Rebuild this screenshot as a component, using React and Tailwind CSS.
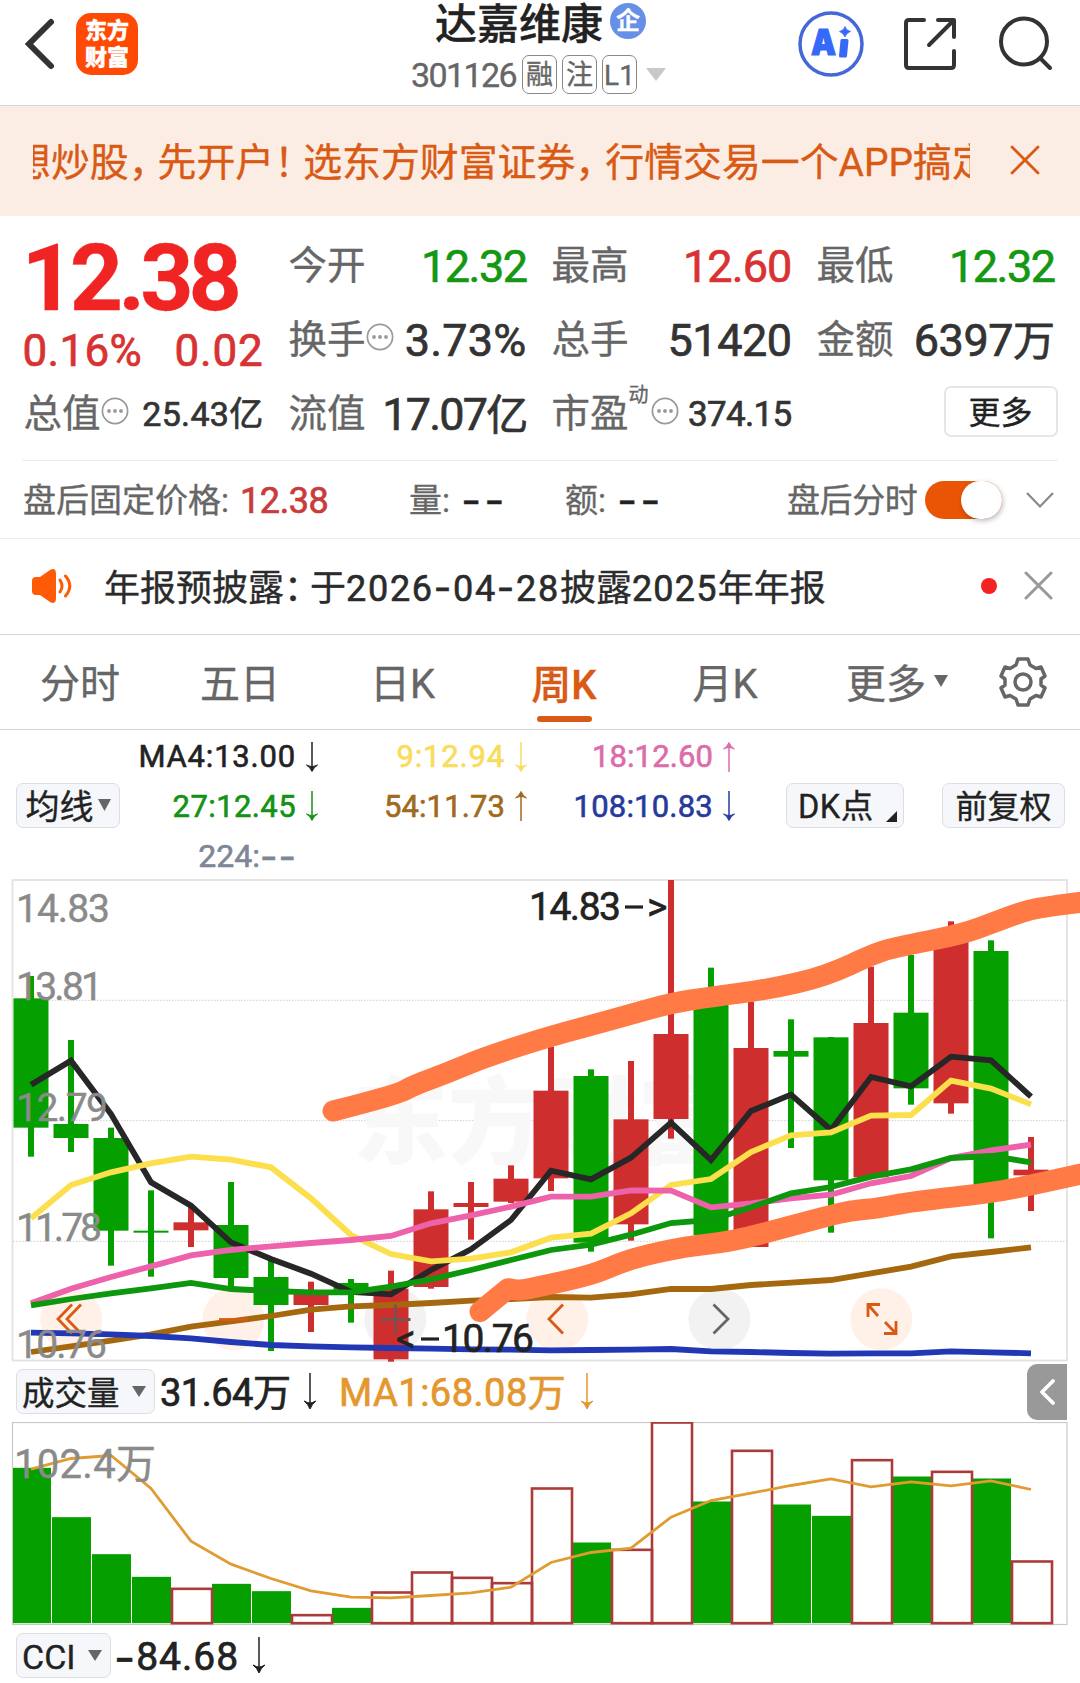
import React from "react";

const GREEN = "#05a000";
const RED = "#cf2e2e";
const CJK = '"Noto Sans CJK SC"';
const STACK = `Roboto, ${CJK}, sans-serif`;

/* Price data is kept in thirds of a pixel: [high, bodyTop, bodyBottom, low, up] */
const candles = [
  [318, 385, 773, 860, 0], [510, 762, 804, 846, 0], [773, 804, 1082, 1187, 0],
  [961, 1082, 1088, 1220, 0], [1010, 1057, 1081, 1131, 1], [936, 1065, 1224, 1255, 0],
  [1170, 1221, 1305, 1443, 0], [1235, 1270, 1305, 1386, 1], [1227, 1239, 1275, 1358, 0],
  [1202, 1256, 1468, 1475, 1], [964, 1018, 1251, 1256, 1], [936, 999, 1011, 1109, 1],
  [886, 926, 995, 999, 1], [530, 662, 925, 963, 1], [598, 618, 1118, 1145, 0],
  [573, 748, 1063, 1112, 1], [30, 492, 747, 806, 1], [293, 400, 1095, 1095, 0],
  [395, 534, 1131, 1131, 1], [448, 543, 560, 834, 0], [501, 502, 931, 1088, 0],
  [290, 459, 922, 922, 1], [255, 428, 655, 704, 0], [154, 215, 700, 731, 1],
  [211, 243, 945, 1105, 0], [801, 899, 916, 1023, 1],
];

const averages = [
  { color: "#272727", data: [644, 572, 732, 937, 1007, 1117, 1167, 1211, 1266, 1273, 1200, 1138, 1050, 902, 928, 863, 758, 870, 723, 674, 780, 621, 649, 560, 571, 680] },
  { color: "#fbdf4c", data: [1045, 945, 907, 880, 860, 869, 892, 985, 1095, 1152, 1174, 1166, 1147, 1103, 1091, 1030, 945, 927, 846, 796, 787, 737, 735, 632, 656, 703] },
  { color: "#ee61ab", data: [1300, 1256, 1221, 1189, 1156, 1140, 1129, 1119, 1110, 1098, 1060, 1036, 1010, 980, 980, 961, 962, 1012, 1000, 985, 974, 940, 918, 864, 841, 824] },
  { color: "#0c970c", data: [1306, 1287, 1270, 1255, 1239, 1257, 1263, 1267, 1267, 1250, 1228, 1200, 1170, 1140, 1124, 1094, 1059, 1050, 1012, 970, 951, 920, 898, 864, 858, 877] },
  { color: "#a5680f", data: [1446, 1429, 1412, 1393, 1370, 1354, 1338, 1319, 1309, 1305, 1299, 1292, 1287, 1281, 1283, 1273, 1257, 1257, 1245, 1238, 1230, 1210, 1190, 1159, 1146, 1132] },
  { color: "#2137b4", data: [1388, 1390, 1393, 1398, 1405, 1416, 1425, 1429, 1432, 1434, 1436, 1438, 1439, 1441, 1440, 1439, 1437, 1444, 1446, 1449, 1451, 1450, 1450, 1444, 1447, 1450] },
];

const upperMark = [[333, 723], [396, 675], [413, 647], [448, 608], [482, 565], [540, 508], [592, 465], [626, 437], [671, 399], [712, 380], [771, 357], [826, 318], [877, 247], [902, 228], [963, 192], [994, 157], [1022, 126], [1039, 113], [1090, 93]];
const lowerMark = [[480, 1325], [494, 1290], [508, 1256], [508, 1256], [520, 1262], [540, 1249], [592, 1215], [619, 1180], [643, 1157], [685, 1130], [733, 1114], [788, 1070], [826, 1040], [850, 1022], [877, 1015], [912, 995], [994, 968], [1036, 942], [1090, 906]];

const volumes = [
  [323, 0], [471, 0], [582, 0], [650, 0], [686, 1], [671, 0], [693, 0], [765, 1], [743, 0],
  [697, 1], [637, 1], [653, 1], [669, 1], [385, 1], [547, 0], [569, 1], [187, 1], [424, 0],
  [272, 1], [433, 0], [467, 0], [300, 1], [349, 0], [335, 1], [355, 0], [604, 1],
];
const volumeMa = [327, 295, 286, 385, 543, 612, 655, 692, 711, 713, 706, 698, 681, 607, 577, 564, 471, 421, 399, 376, 356, 380, 365, 377, 362, 388];

const cx = (i) => 31 + 40 * i;
const py = (v) => (v - 30) / 3 + 1;
const vy = (v) => (v - 187) / 3 + 1;

function smooth(points) {
  const p = points.map(([x, v]) => [x, py(v)]);
  let d = `M${p[0][0]} ${p[0][1]}`;
  for (let i = 1; i < p.length - 1; i++) {
    d += ` Q${p[i][0]} ${p[i][1]} ${(p[i][0] + p[i + 1][0]) / 2} ${(p[i][1] + p[i + 1][1]) / 2}`;
  }
  return `${d} L${p[p.length - 1][0]} ${p[p.length - 1][1]}`;
}

function Arrow({ up, tall }) {
  return (
    <svg width="22" height={tall ? 39 : 32} viewBox={tall ? "0 0 22 39" : "0 0 22 32"} fill="none" stroke="currentColor" className="shrink-0">
      <g transform={up ? "rotate(180 11 16)" : undefined}>
        <path d={tall ? "M11 1V36" : "M11 1V29"} strokeWidth="1.5" />
        <path d={tall ? "M5 29Q9 32 11 37Q13 32 17 29Q13 31 11 31Q9 31 5 29Z" : "M5.5 24Q9 26 11 30.500Q13 26 16.500 24Q13 25.500 11 25.500Q9 25.500 5.500 24Z"} fill="currentColor" strokeWidth="1" />
      </g>
    </svg>
  );
}

function Dots() {
  return (
    <svg width="28" height="28" viewBox="0 0 28 28" className="mb-1 shrink-0">
      <circle cx="14" cy="14" r="12.600" fill="none" stroke="#999" strokeWidth="1.700" />
      {[8, 14, 20].map((x) => <circle key={x} cx={x} cy="14" r="1.900" fill="#999" />)}
    </svg>
  );
}

function Down({ w = 14, h = 12, color = "#666" }) {
  return <svg width={w} height={h} viewBox="0 0 14 12" preserveAspectRatio="none" className="shrink-0"><path d="M0 0H14L7 12Z" fill={color} /></svg>;
}

function Cell({ label, icon, sup, children }) {
  return (
    <div className="flex h-[74px] items-center justify-between leading-none whitespace-nowrap">
      <div className="flex items-center">
        <span className="pt-[3px] text-[38.5px] text-[#666]">{label}</span>
        {sup && <span className="mr-0.5 mb-9 text-[20px] text-[#666]">{sup}</span>}
        {icon && <Dots />}
      </div>
      <div className="pt-0.5 text-[#333] [-webkit-text-stroke:0.7px]">{children}</div>
    </div>
  );
}

function Ma({ up, children, className }) {
  return (
    <div className={`flex h-[49.5px] items-center justify-end gap-[5px] text-[31px] leading-none whitespace-nowrap [-webkit-text-stroke:0.6px] ${className}`}>
      {children}
      <Arrow up={up} />
    </div>
  );
}

function Header() {
  return (
    <header className="flex h-[106px] items-start border-b border-[#d6d6d6] pl-[22px]">
      <svg width="34" height="56" viewBox="0 0 34 56" className="mt-4 shrink-0" fill="none" stroke="#333" strokeWidth="6" strokeLinecap="round" strokeLinejoin="miter">
        <path d="M29 6L7 28L29 50" />
      </svg>
      <div className="mt-[13px] ml-5 flex h-[62px] w-[62px] flex-col items-center justify-center rounded-[15px] bg-[#ff4a05] text-[22px] leading-[27px] font-black text-white">
        <span>东方</span><span>财富</span>
      </div>
      <div className="ml-[273px] flex w-[267px] flex-col">
        <div className="flex h-[46px] items-center pl-[24px]">
          <span className="pt-1 text-[42px] leading-[44px] font-medium text-[#222]">达嘉维康</span>
          <span className="mb-1 ml-[7px] flex h-9 w-9 items-center justify-center rounded-full bg-[#6690e6] text-[24px] leading-none font-bold text-white">企</span>
        </div>
        <div className="mt-[9px] flex h-[39px] items-center gap-[5px] leading-none text-[#666]">
          <span className="mr-[1px] w-[105px] text-[34px] tracking-[-1.6px]">301126</span>
          <span className="flex h-[39px] w-[35px] shrink-0 items-center justify-center rounded-[7px] border border-[#888] pt-0.5 text-[27px]">融</span>
          <span className="flex h-[39px] w-[35px] shrink-0 items-center justify-center rounded-[7px] border border-[#888] pt-0.5 text-[27px]">注</span>
          <span className="flex h-[39px] w-[35px] shrink-0 items-center justify-center rounded-[7px] border border-[#888] pt-0.5 text-[28px]">L1</span>
          <span className="ml-1 flex"><Down w={20} h={13} color="#c8c8c8" /></span>
        </div>
      </div>
      <svg width="66" height="66" viewBox="0 0 66 66" className="mt-[11px] ml-[120px] shrink-0">
        <circle cx="33" cy="33" r="31" fill="none" stroke="#4468d8" strokeWidth="3.500" />
        <text x="13" y="44" fontFamily="Inter, sans-serif" fontWeight="900" fontSize="36" fill="#3668fa" stroke="#3668fa" strokeWidth="1.200" strokeLinejoin="round" textLength="25" lengthAdjust="spacingAndGlyphs">A</text>
        <path d="M44 29.500H49L47.500 45H42.500Z" fill="#3668fa" stroke="#3668fa" strokeWidth="3" strokeLinejoin="round" />
        <path d="M47 15.500Q48 19.500 52.500 20.500Q48 22 47 26Q45.500 22 41.500 20.500Q46 19.500 47 15.500Z" fill="#3668fa" stroke="#3668fa" strokeWidth="0.800" />
      </svg>
      <svg width="56" height="56" viewBox="0 0 56 56" className="mt-4 ml-[38px] shrink-0" fill="none" stroke="#333" strokeWidth="4" strokeLinecap="round" strokeLinejoin="round">
        <path d="M22 4H7Q4 4 4 7V49Q4 52 7 52H49Q52 52 52 49V35M36 4H52V21M51 5L27 29" />
      </svg>
      <svg width="58" height="58" viewBox="0 0 58 58" className="mt-[15px] ml-[38px] shrink-0" fill="none" stroke="#333" strokeWidth="4" strokeLinecap="round">
        <circle cx="28" cy="26.500" r="23" /><path d="M44 43L54 53" />
      </svg>
    </header>
  );
}

export default function App() {
  return (
    <div className="h-[1683px] w-[1080px] overflow-hidden bg-white [-webkit-text-stroke:0.35px]" style={{ fontFamily: STACK }}>
      <Header />

      <div className="flex h-[110px] items-center bg-[#fcede4] pl-[33px] text-[#d95a14]">
        <div className="flex w-[937px] overflow-hidden pt-[3px]">
          <span className="-ml-[21px] text-[38.9px] leading-[50px] whitespace-nowrap">
            想炒股<span className="tracking-[-10px]">，</span>先开户<span className="tracking-[-10px]">！</span>选东方财富证券<span className="tracking-[-9px]">，</span>行情交易一个APP搞定
          </span>
        </div>
        <svg width="30" height="30" viewBox="0 0 30 30" className="mb-0.5 ml-10" stroke="#d95a14" strokeWidth="2.800" strokeLinecap="round"><path d="M2 2L28 28M28 2L2 28" /></svg>
      </div>

      <section className="mx-[22px] grid h-[245px] grid-cols-[240px_238px_240px_238px] content-start gap-x-[25px] border-b border-[#ececec] px-[1.5px] pt-3">
        <div>
          <div className="-ml-0.5 flex h-24 items-center pt-1 text-[93px] leading-none font-bold tracking-[-5px] text-[#f12424]">12.38</div>
          <div className="-ml-[1px] flex h-[52px] items-center justify-between pt-0.5 text-[44px] leading-none text-[#d83232] [-webkit-text-stroke:0.7px]">
            <span className="tracking-[0.300px]">0.16%</span><span className="tracking-[0.8px]">0.02</span>
          </div>
          <Cell label="总值" icon><span className="text-[34px] tracking-[0.300px]">25.43亿</span></Cell>
        </div>
        <div>
          <Cell label="今开"><span className="text-[45px] tracking-[-1.500px] text-[#149814]">12.32</span></Cell>
          <Cell label="换手" icon><span className="text-[45px] tracking-[0.200px]">3.73%</span></Cell>
          <Cell label="流值"><span className="text-[45px] tracking-[-1.800px]">17.07<span className="text-[42px]">亿</span></span></Cell>
        </div>
        <div>
          <Cell label="最高"><span className="text-[45px] tracking-[-0.900px] text-[#d83232]">12.60</span></Cell>
          <Cell label="总手"><span className="text-[45px] tracking-[-0.5px]">51420</span></Cell>
          <Cell label="市盈" sup="动" icon><span className="text-[35px] tracking-[-0.700px]">374.15</span></Cell>
        </div>
        <div>
          <Cell label="最低"><span className="text-[45px] tracking-[-1.500px] text-[#149814]">12.32</span></Cell>
          <Cell label="金额"><span className="text-[45px] tracking-[-0.500px]">6397<span className="text-[42px]">万</span></span></Cell>
          <div className="-mr-[3px] flex h-[74px] items-center justify-end">
            <button className="mb-[3px] h-[51px] w-[114px] rounded-[7px] border-2 border-[#e6e6e6] pt-[3px] text-[32px] leading-none text-[#222]">更多</button>
          </div>
        </div>
      </section>

      <section className="flex h-[78px] items-center border-b border-[#ececec] pl-[23px] text-[33px] leading-none whitespace-nowrap text-[#666]">
        <span className="w-[217px] pt-0.5">盘后固定价格:</span>
        <span className="w-[169px] pt-0.5 text-[36px] tracking-[-0.400px] text-[#c83c3c] [-webkit-text-stroke:0.7px]">12.38</span>
        <span className="w-[52px] pt-0.5">量:</span>
        <span className="w-[104px] font-['Inter'] text-[44px] tracking-[3px] text-[#222]">--</span>
        <span className="w-[52px] pt-0.5">额:</span>
        <span className="w-[170px] font-['Inter'] text-[44px] tracking-[3px] text-[#222]">--</span>
        <span className="pt-0.5 tracking-[-0.400px]">盘后分时</span>
        <div className="ml-[8px] flex h-[38px] w-[77px] justify-end rounded-full bg-[#e95504]">
          <div className="h-[38px] w-[41px] rounded-full bg-white shadow-[1px_2px_5px_rgba(0,0,0,0.25)]" />
        </div>
        <svg width="28" height="18" viewBox="0 0 28 18" className="ml-6" fill="none" stroke="#888" strokeWidth="2.200"><path d="M1 2L14 15.500L27 2" /></svg>
      </section>

      <section className="flex h-24 items-center border-b border-[#d6d6d6] pl-[31px]">
        <svg width="42" height="36" viewBox="0 0 42 36" className="mb-0.5 shrink-0" fill="none" stroke="#ff5a05" strokeWidth="3" strokeLinecap="round">
          <path d="M1 13Q1 9 5 9H9L19 2Q25 -1 25 6V30Q25 37 19 34L9 27H5Q1 27 1 23Z" fill="#ff5a05" stroke="none" />
          <path d="M29 12Q33 18 29 24M34.500 8Q43 18 34.500 28" />
        </svg>
        <span className="ml-[31px] w-[877px] pt-0.5 text-[36px] leading-none whitespace-nowrap text-[#2b2b2b]">
          年报预披露<span className="tracking-[-10px]">：</span>于<span className="tracking-[1.7px] [-webkit-text-stroke:0.6px]">2026<span className="font-['Inter'] text-[38px]">-</span>04<span className="font-['Inter'] text-[38px]">-</span>28</span>披露<span className="tracking-[1.2px] [-webkit-text-stroke:0.6px]">2025</span>年年报
        </span>
        <span className="mb-0.5 h-4 w-4 rounded-full bg-[#f52222]" />
        <svg width="30" height="30" viewBox="0 0 30 30" className="mb-0.5 ml-[27px]" stroke="#999" strokeWidth="3" strokeLinecap="round"><path d="M2 2L27 27M27 2L2 27" /></svg>
      </section>

      <nav className="flex h-[95px] items-center border-b border-[#d6d6d6] text-[40px] leading-none text-[#666]">
        <span className="w-[160px] pt-[6px] text-center">分时</span>
        <span className="w-[160px] pt-[6px] text-center">五日</span>
        <span className="w-[165px] pt-[6px] text-center">日K</span>
        <span className="flex h-full w-[158px] flex-col items-center text-[#d95a14]">
          <span className="flex h-[81px] items-center pt-[20px] font-medium">周K</span>
          <span className="h-[6px] w-[55px] rounded-full bg-[#d95a14]" />
        </span>
        <span className="w-[164px] pt-[6px] text-center">月K</span>
        <span className="ml-[39px] pt-[6px]">更多</span>
        <span className="mb-0.5 ml-[8px]"><Down w={14} h={12} /></span>
        <svg width="48" height="50" viewBox="0 0 48 50" className="ml-[51px]" fill="none" stroke="#666" strokeWidth="3.500" strokeLinejoin="round">
          <path d="M19 2H29L31 8L37 11.500L42 10L46 19L42 22V28L46 31L42 40L37 38.500L31 42L29 48H19L17 42L11 38.500L6 40L2 31L6 28V22L2 19L6 10L11 11.500L17 8Z" />
          <circle cx="24" cy="25" r="8" />
        </svg>
      </nav>

      <section className="grid h-[149px] grid-cols-[120px_203px_209px_208px_340px] content-start pt-0.5">
        <div className="col-start-1 row-start-2 flex items-center pb-0.5 pl-4">
          <button className="flex h-[45px] w-[104px] items-center justify-center gap-1 rounded-[7px] border border-[#dcdee2] bg-[#f6f7fa] text-[34px] leading-none text-[#222]"><span className="pt-[3px]">均线</span><Down w={13} h={12} /></button>
        </div>
        <Ma className="col-start-2 row-start-1 tracking-[0.8px] text-[#222]">MA4:13.00</Ma>
        <Ma className="col-start-3 row-start-1 tracking-[0.8px] text-[#f8dc5a]">9:12.94</Ma>
        <Ma up className="col-start-4 row-start-1 tracking-[0.100px] text-[#dc6caa]">18:12.60</Ma>
        <Ma className="col-start-2 row-start-2 tracking-[0.400px] text-[#149214]">27:12.45</Ma>
        <Ma up className="col-start-3 row-start-2 tracking-[0.100px] text-[#a06a1c]">54:11.73</Ma>
        <Ma className="col-start-4 row-start-2 tracking-[0.200px] text-[#263a9c]">108:10.83</Ma>
        <div className="col-start-5 row-start-2 flex items-center pb-0.5 pl-[46px]">
          <button className="flex h-[45px] w-[118px] shrink-0 items-center rounded-[7px] border border-[#dcdee2] bg-[#f6f7fa] pl-[11px] text-[32.500px] leading-none whitespace-nowrap text-[#222]">
            <span className="w-[78px] pt-[3px] text-left tracking-[0.500px]">DK点</span>
            <svg width="11" height="11" viewBox="0 0 11 11" className="mt-[22px] ml-[10px] shrink-0"><path d="M11 0V11H0Z" fill="#222" /></svg>
          </button>
          <button className="ml-[38px] h-[45px] w-[123px] shrink-0 rounded-[7px] border border-[#dcdee2] bg-[#f6f7fa] pt-[3px] text-[32px] leading-none text-[#222]">前复权</button>
        </div>
        <div className="col-start-2 row-start-3 flex h-[49.5px] items-center justify-end pr-[26px] text-[32px] leading-none text-[#7d8796] [-webkit-text-stroke:0.6px]">
          224:<span className="font-['Inter'] text-[38px] tracking-[1px]">--</span>
        </div>
      </section>

      <svg width="1080" height="484" viewBox="0 0 1080 484" className="block" fontFamily={STACK}>
        <rect x="12.500" y="1" width="1054.500" height="480.500" fill="none" stroke="#e2e2e2" strokeWidth="1.800" />
        {[391, 752, 1114].map((v) => <line key={v} x1="13" x2="1067" y1={py(v)} y2={py(v)} stroke="#cfcfcf" strokeWidth="1" strokeDasharray="1.500 1.500" />)}
        <text x="353" y={py(862)} fontSize="95" fontWeight="900" fill="#f8f8f8">东方财富</text>
        {[71.300, 233.500, 395.300, 557.200, 719.400, 881.300].map((x, i) => (
          <circle key={x} cx={x} cy={py(1348)} r="31" fill={i === 2 || i === 4 ? "#f2f2f2" : "#fff0e8"} />
        ))}
        {candles.map(([h, t, b, l, up], i) => (
          <g key={i} fill={up ? RED : GREEN}>
            <rect x={cx(i) - 3} y={py(h)} width="6" height={(l - h) / 3} />
            <rect x={cx(i) - 17.500} y={py(t)} width="35" height={(b - t) / 3} />
          </g>
        ))}
        {averages.map(({ color, data }) => (
          <polyline key={color} points={data.map((v, i) => `${cx(i)},${py(v)}`).join(" ")} fill="none" stroke={color} strokeWidth="5.800" />
        ))}
        <g fill="none" stroke="#d95a14" strokeWidth="2.800">
          <path d="M72 425.500L58 440L72 454.500M81 425.500L67 440L81 454.500" />
          <path d="M219 440.500H248" />
          <path d="M563 425.500L549 440L563 454.500" />
          <path d="M868 438V425.500H880M868 425.500L878 437M896 442V454.500H884M896 454.500L885 443" />
        </g>
        <path d="M380.500 440.500H410.500M395.500 425.500V455.500" stroke="#7a5050" strokeWidth="2.800" />
        <path d="M713.500 425.500L728 440L713.500 454.500" fill="none" stroke="#666" strokeWidth="2.800" />
        <g fontSize="39" fill="#8a8a8a" stroke="#8a8a8a" strokeWidth="0.400">
          <text x="16" y={py(156)} textLength="94">14.83</text>
          <text x="16" y={py(391)} textLength="87">13.81</text>
          <text x="16" y={py(752)} textLength="92">12.79</text>
          <text x="16" y={py(1114)} textLength="86">11.78</text>
          <text x="16" y={py(1464)} textLength="91">10.76</text>
        </g>
        <g fontSize="39" fill="#222" stroke="#222" strokeWidth="0.600">
          <text x="529" y={py(150)} textLength="92">14.83</text>
          <path d="M625 28H643" strokeWidth="3.200" />
          <text x="647" y={py(150)}>&gt;</text>
          <text x="396" y={py(1446)}>&lt;</text>
          <path d="M421 460H439" strokeWidth="3.200" />
          <text x="442" y={py(1446)} textLength="92">10.76</text>
        </g>
        <g fill="none" stroke="#ff7a45" strokeWidth="21" strokeLinecap="round" strokeLinejoin="round">
          <path d={smooth(upperMark)} />
          <path d={smooth(lowerMark)} />
        </g>
      </svg>

      <section className="flex h-[59px] items-center pr-[13px] pb-0.5 pl-4 leading-none whitespace-nowrap">
        <button className="flex h-[45px] w-[139px] shrink-0 items-center justify-between rounded-[7px] border border-[#dcdee2] bg-[#f6f7fa] pr-[8px] pl-[5px] text-[32.500px] text-[#222]"><span className="pt-[5px]">成交量</span><Down w={14} h={11} /></button>
        <span className="ml-[5px] w-[131px] pt-[3px] text-[38px] tracking-[-0.5px] text-[#222] [-webkit-text-stroke:0.7px]">31.64万</span>
        <span className="ml-[8px] flex text-[#222]"><Arrow tall /></span>
        <span className="ml-[18px] w-[229px] pt-[3px] text-[38px] tracking-[0.500px] text-[#e4972f] [-webkit-text-stroke:0.7px]">MA1:68.08万</span>
        <span className="ml-[8px] flex text-[#e4972f]"><Arrow tall /></span>
        <span className="ml-auto flex h-14 w-10 items-center justify-center rounded-l-[10px] bg-[#999]">
          <svg width="18" height="28" viewBox="0 0 18 28" fill="none" stroke="#fff" strokeWidth="3.800" strokeLinecap="round" strokeLinejoin="round"><path d="M15 3L4 14L15 25" /></svg>
        </span>
      </section>

      <svg width="1080" height="205" viewBox="0 0 1080 205" className="block" fontFamily={STACK}>
        <rect x="12.500" y="0.500" width="1054.500" height="202" fill="none" stroke="#c8c8c8" strokeWidth="1.200" />
        <g transform="translate(0 -0.5)">
          {volumes.map(([v, up], i) =>
            up ? null : <rect key={i} x={i === 0 ? 13 : cx(i) - 19} y={vy(v)} width={i === 0 ? 38 : 39} height={vy(789) - vy(v)} fill={GREEN} />
          )}
          {volumes.map(([v, up], i) =>
            up ? <rect key={i} x={cx(i) - 19} y={vy(v)} width="40" height={vy(789) - vy(v)} fill="none" stroke="#ad3a3a" strokeWidth="2.600" /> : null
          )}
          <polyline points={volumeMa.map((v, i) => `${cx(i)},${vy(v)}`).join(" ")} fill="none" stroke="#e09c30" strokeWidth="2.800" />
        </g>
        <text x="14" y={vy(353)} fontSize="40" fill="#8a8a8a" stroke="#8a8a8a" strokeWidth="0.400" textLength="142">102.4万</text>
      </svg>

      <section className="flex items-center pt-[6px] pl-4 leading-none text-[#222]">
        <button className="flex h-[45px] w-[95px] shrink-0 items-center justify-between rounded-[7px] border border-[#dcdee2] bg-[#f6f7fa] pr-[8px] pl-[5px] text-[34px]"><span className="pt-0.5">CCI</span><Down w={14} h={11} /></button>
        <span className="ml-[3px] flex w-[127px] items-center pt-[3px] text-[39px] tracking-[1px] [-webkit-text-stroke:0.7px]"><span className="font-['Inter'] text-[46px] leading-[39px]">-</span>84.68</span>
        <span className="ml-[7px] flex"><Arrow tall /></span>
      </section>
    </div>
  );
}
